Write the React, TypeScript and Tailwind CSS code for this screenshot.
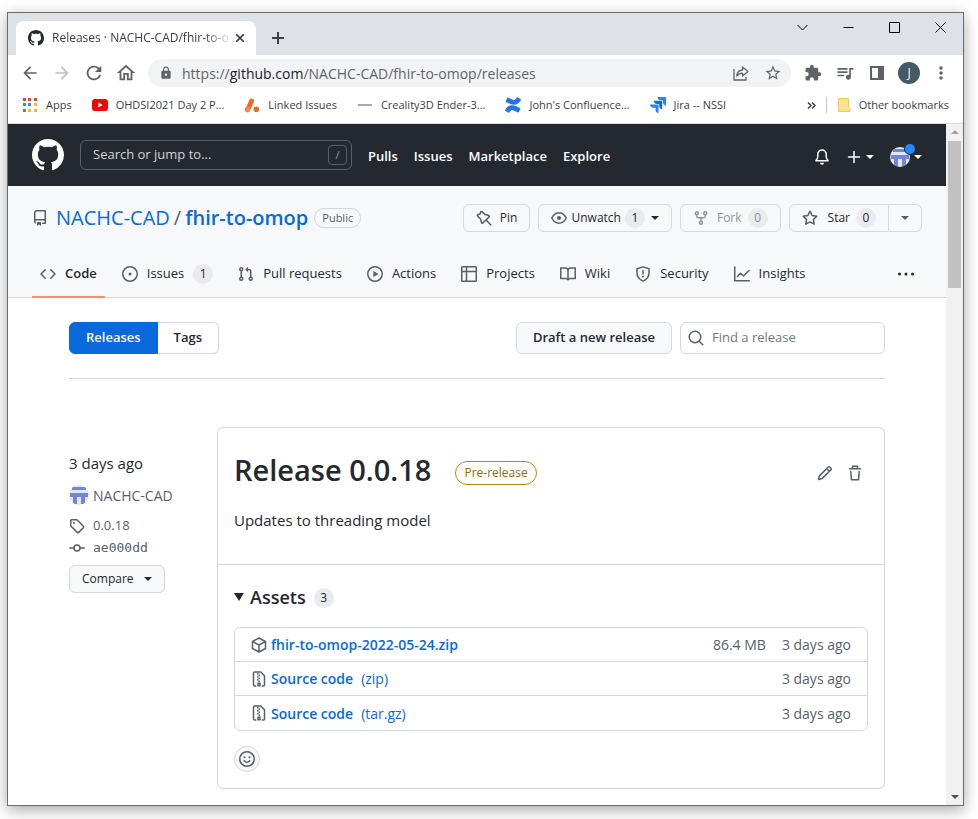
import type { ReactNode } from "react";
import {
  MdArrowBack,
  MdArrowForward,
  MdExtension,
  MdLock,
  MdMoreVert,
  MdOutlineHome,
  MdQueueMusic,
  MdRefresh,
  MdStarBorder,
} from "react-icons/md";
import { SiConfluence } from "react-icons/si";

function Octicon({ d, className }: { d: string; className: string }) {
  return (
    <svg viewBox="0 0 16 16" fill="currentColor" fillRule="evenodd" aria-hidden="true" className={className}>
      <path d={d} />
    </svg>
  );
}

const MARK =
  "M8 0C3.58 0 0 3.58 0 8c0 3.54 2.29 6.53 5.47 7.59.4.07.55-.17.55-.38 0-.19-.01-.82-.01-1.49-2.01.37-2.53-.49-2.69-.94-.09-.23-.48-.94-.82-1.13-.28-.15-.68-.52-.01-.53.63-.01 1.08.58 1.23.82.72 1.21 1.87.87 2.33.66.07-.52.28-.87.51-1.07-1.78-.2-3.64-.89-3.64-3.95 0-.87.31-1.59.82-2.15-.08-.2-.36-1.02.08-2.12 0 0 .67-.21 2.2.82.64-.18 1.32-.27 2-.27.68 0 1.36.09 2 .27 1.53-1.04 2.2-.82 2.2-.82.44 1.1.16 1.92.08 2.12.51.56.82 1.27.82 2.15 0 3.07-1.87 3.75-3.65 3.95.29.25.54.73.54 1.48 0 1.07-.01 1.93-.01 2.2 0 .21.15.46.55.38A8.013 8.013 0 0016 8c0-4.42-3.58-8-8-8z";
const REPO =
  "M2 2.5A2.5 2.5 0 014.5 0h8.75a.75.75 0 01.75.75v12.5a.75.75 0 01-.75.75h-2.5a.75.75 0 110-1.5h1.75v-2h-8a1 1 0 00-.714 1.7.75.75 0 01-1.072 1.05A2.495 2.495 0 012 11.5v-9zm10.5-1V9h-8c-.356 0-.694.074-1 .208V2.5a1 1 0 011-1h8zM5 12.25v3.25a.25.25 0 00.4.2l1.45-1.087a.25.25 0 01.3 0L8.6 15.7a.25.25 0 00.4-.2v-3.25a.25.25 0 00-.25-.25h-3.5a.25.25 0 00-.25.25z";
const CODE =
  "M4.72 3.22a.75.75 0 011.06 1.06L2.06 8l3.72 3.72a.75.75 0 11-1.06 1.06L.47 8.53a.75.75 0 010-1.06l4.25-4.25zm6.56 0a.75.75 0 10-1.06 1.06L13.94 8l-3.72 3.72a.75.75 0 101.06 1.06l4.25-4.25a.75.75 0 000-1.06l-4.25-4.25z";

// 16px outline icons: "line" is stroked, "solid" is filled.
const GLYPHS = {
  pin: { line: "M5.6 1.4 9.2 4.6l3.7.9.5 1.1-6.8 6.6-1.100-.4-.8-3.500L1.200 5.600l.4-.8L4.100 4l.7-2.500zM10.400 10.200l4.400 4.800", solid: "" },
  shield: { line: "M8 .9 2 2.800V7c0 3.700 2.200 6.300 6 8.100 3.800-1.800 6-4.400 6-8.100V2.800zM8 4.600v3.400", solid: "M7 10.500a1 1 0 1 0 2 0 1 1 0 1 0-2 0z" },
  issue: { line: "M.75 8a7.250 7.250 0 1 0 14.500 0 7.250 7.250 0 1 0-14.500 0z", solid: "M6.500 8a1.500 1.500 0 1 0 3 0 1.500 1.500 0 1 0-3 0z" },
  pull: {
    line: "M1.750 3.250a1.500 1.500 0 1 0 3 0 1.500 1.500 0 1 0-3 0zM1.750 12.750a1.500 1.500 0 1 0 3 0 1.500 1.500 0 1 0-3 0zM11.250 12.750a1.500 1.500 0 1 0 3 0 1.500 1.500 0 1 0-3 0zM3.250 5v6M12.750 11V5.500a2 2 0 0 0-2-2H9.500",
    solid: "M10 .7v5.600L7.200 3.500z",
  },
  play: { line: "M.75 8a7.250 7.250 0 1 0 14.500 0 7.250 7.250 0 1 0-14.500 0z", solid: "M6.400 5v6L11.400 8z" },
  table: { line: "M1.500.75h13a.75.75 0 0 1 .75.75v13a.75.75 0 0 1-.75.75h-13a.75.75 0 0 1-.75-.75v-13a.75.75 0 0 1 .75-.75zM.75 5.500h14.500M5.500.75v14.500", solid: "" },
  book: { line: "M.75 2h4.500C6.800 2 8 3.200 8 4.600v9.200c-.5-.8-1.300-1.200-2.300-1.200H.75zM15.250 2h-4.500C9.200 2 8 3.200 8 4.600v9.200c.5-.8 1.300-1.200 2.300-1.200h4.950z", solid: "" },
  graph: { line: "M.75 1v13.750h14.500M3.500 10.500 6.500 7.300l3 2.700L15 4.500", solid: "" },
  eye: {
    line: "M8 2.750C4.800 2.750 2.200 5.150.8 8c1.400 2.850 4 5.250 7.200 5.250S13.800 10.850 15.200 8C13.800 5.150 11.200 2.750 8 2.750z",
    solid: "M6 8a2 2 0 1 0 4 0 2 2 0 1 0-4 0z",
  },
  fork: {
    line: "M2.250 3.250a1.500 1.500 0 1 0 3 0 1.500 1.500 0 1 0-3 0zM10.750 3.250a1.500 1.500 0 1 0 3 0 1.500 1.500 0 1 0-3 0zM6.500 12.750a1.500 1.500 0 1 0 3 0 1.500 1.500 0 1 0-3 0zM3.750 5v1.250a1.500 1.500 0 0 0 1.500 1.500h5.500a1.500 1.500 0 0 0 1.500-1.500V5M8 7.750V11",
    solid: "",
  },
  star: { line: "M8 1.200l2.100 4.250 4.700.7-3.400 3.300.8 4.650L8 11.900l-4.200 2.200.8-4.650-3.400-3.300 4.700-.7z", solid: "" },
  bell: { line: "M8 1a4.250 4.250 0 0 0-4.250 4.250V8.500L1.900 11.800h12.200l-1.850-3.300V5.250A4.250 4.250 0 0 0 8 1z", solid: "M6 13.700h4a2 2 0 0 1-4 0z" },
  pencil: { line: "M1.500 14.500l.9-3.600L11.300 2a1 1 0 0 1 1.500 0L14 3.200a1 1 0 0 1 0 1.500l-8.900 8.900zM9.700 3.700l2.600 2.600", solid: "" },
  trash: { line: "M2.500 3.750h11M5.500 3.500V1.250h5V3.500M3.800 6.500l.6 8.250h7.200l.6-8.250", solid: "" },
  tag: {
    line: "M1.750 2.500v5c0 .3.1.5.3.7l6.200 6.200c.4.4 1 .4 1.400 0l4.700-4.700c.4-.4.4-1 0-1.400L8.200 2.050a1 1 0 0 0-.7-.3h-5a.75.75 0 0 0-.75.75z",
    solid: "M4 5a1 1 0 1 0 2 0 1 1 0 1 0-2 0z",
  },
  commit: { line: "M5 8a3 3 0 1 0 6 0 3 3 0 1 0-6 0zM.75 8H5M11 8h4.250", solid: "" },
  pack: { line: "M8 1l6.500 3.500v7L8 15l-6.500-3.500v-7zM1.700 4.700 8 8l6.300-3.300M8 8v7", solid: "" },
  zip: {
    line: "M4.800 15H3.500a1 1 0 0 1-1-1V2a1 1 0 0 1 1-1h6.300l3.700 3.700V14a1 1 0 0 1-1 1h-1.300M7 14.800v-2.600h2v2.600z",
    solid: "M6 2h1.500v1.500H6zM7.500 3.500H9V5H7.500zM6 5h1.500v1.500H6zM7.500 6.500H9V8H7.500zM6 8h1.500v1.500H6zM7.500 9.500H9V11H7.500z",
  },
  smiley: {
    line: "M.75 8a7.250 7.250 0 1 0 14.500 0 7.250 7.250 0 1 0-14.500 0zM5.300 9.700c.7 1 1.600 1.500 2.700 1.500s2-.5 2.700-1.500",
    solid: "M4.500 6.200a1 1 0 1 0 2 0 1 1 0 1 0-2 0zM9.500 6.200a1 1 0 1 0 2 0 1 1 0 1 0-2 0z",
  },
  search: { line: "M1.250 7a5.750 5.750 0 1 0 11.500 0 5.750 5.750 0 1 0-11.500 0zM11.200 11.200l3.600 3.600", solid: "" },
  plus: { line: "M8 2.500v11M2.500 8h11", solid: "" },
  dots: { line: "", solid: "M0 8a1.500 1.500 0 1 0 3 0 1.500 1.500 0 1 0-3 0zM6.500 8a1.500 1.500 0 1 0 3 0 1.500 1.500 0 1 0-3 0zM13 8a1.500 1.500 0 1 0 3 0 1.500 1.500 0 1 0-3 0z" },
};

function Glyph({ name, className = "" }: { name: keyof typeof GLYPHS; className?: string }) {
  const g = GLYPHS[name];
  return (
    <svg viewBox="0 0 16 16" fill="none" aria-hidden="true" className={`size-4 shrink-0 overflow-visible ${className}`}>
      <path d={g.line} stroke="currentColor" strokeWidth="1.500" strokeLinecap="round" strokeLinejoin="round" />
      <path d={g.solid} fill="currentColor" />
    </svg>
  );
}

function Caret() {
  return <span aria-hidden="true" className="inline-block border-x-4 border-t-4 border-x-transparent border-t-current" />;
}

function Identicon() {
  return (
    <svg viewBox="0 0 20 20" aria-hidden="true" className="size-5 shrink-0 rounded-full bg-[#dde7f2]">
      <path fill="#7486d3" d="M3 2h14v3H3zM1 8h18v4H1zM4 12h4v7H4zM12 12h4v7h-4z" />
    </svg>
  );
}

function ShareIcon() {
  return (
    <svg viewBox="0 0 18 18" fill="none" stroke="currentColor" strokeWidth="1.300" strokeLinejoin="round" aria-hidden="true" className="size-[18px]">
      <path d="M2 5v11h12v-3" />
      <path d="M10.500 3v3C7 6.300 5 8.500 4.700 12c1.500-2 3.300-2.800 5.800-2.800V12L16 7.500z" />
    </svg>
  );
}

function AppsIcon() {
  const colors = ["#ea4335", "#ea4335", "#ea4335", "#34a853", "#4285f4", "#fbbc04", "#34a853", "#fbbc04", "#fbbc04"];
  return (
    <span aria-hidden="true" className="grid size-4 grid-cols-3 gap-[2px] p-px">
      {colors.map((c, i) => (
        <span key={i} className="size-[3px]" style={{ backgroundColor: c }} />
      ))}
    </span>
  );
}

const youtube = (
  <svg viewBox="0 0 16 16" aria-hidden="true" className="size-4">
    <rect y="2" width="16" height="12" rx="3" fill="#f00" />
    <path fill="#fff" d="m6.300 5.400 4.500 2.600-4.500 2.600z" />
  </svg>
);
const issuesMark = (
  <svg viewBox="0 0 16 16" aria-hidden="true" className="size-4">
    <path d="M7.600 4 5 10" stroke="#f26722" strokeWidth="4.800" strokeLinecap="round" />
    <circle cx="3.600" cy="12.400" r="2.800" fill="#f58345" />
    <circle cx="12.300" cy="12.300" r="2.800" fill="#f26722" />
  </svg>
);
const creality = (
  <svg viewBox="0 0 16 16" aria-hidden="true" className="size-4">
    <path d="M1 8h14" stroke="#8a8d90" strokeWidth="1.500" />
  </svg>
);
const jira = (
  <svg viewBox="0 0 16 16" aria-hidden="true" className="size-4">
    <path fill="#2684ff" d="M7.500 0H16v8.500c-2 0-3-1.500-3-3V3.300h-2.300c-1.800 0-3.200-1.300-3.200-3.300z" />
    <path fill="#1868db" d="M3.800 3.800h8.400v8.400c-2 0-3-1.500-3-3V7H7C5.200 7 3.800 5.700 3.800 3.800z" />
    <path fill="#2684ff" d="M0 7.500h8.500V16c-2 0-3-1.500-3-3v-2.300H3.200C1.400 10.700 0 9.500 0 7.500z" />
  </svg>
);

const bookmarks: { label: string; icon: ReactNode }[] = [
  { label: "Apps", icon: <AppsIcon /> },
  { label: "OHDSI2021 Day 2 P...", icon: youtube },
  { label: "Linked Issues", icon: issuesMark },
  { label: "Creality3D Ender-3...", icon: creality },
  { label: "John's Confluence...", icon: <SiConfluence className="size-4 text-[#2374ee]" /> },
  { label: "Jira -- NSSI", icon: jira },
];

function ToolButton({ label, children }: { label: string; children: ReactNode }) {
  return (
    <button type="button" aria-label={label} className="flex size-8 shrink-0 items-center justify-center">
      {children}
    </button>
  );
}

function WindowButton({ label, d }: { label: string; d: string }) {
  return (
    <button type="button" aria-label={label} className="flex h-7 w-[46px] shrink-0 items-center justify-center text-black">
      <svg viewBox="0 0 11 11" fill="none" stroke="currentColor" aria-hidden="true" className="size-[11px]">
        <path d={d} />
      </svg>
    </button>
  );
}

function BrowserChrome() {
  return (
    <header className="text-[#3c4043]">
      <div className="flex h-[42px] bg-[#dee1e6] pl-2">
        <div className="mt-2 flex w-60 items-center rounded-t-lg bg-white pr-2 pl-3">
          <Octicon d={MARK} className="size-4 shrink-0 text-[#24292f]" />
          <span className="ml-2 min-w-0 flex-1 mask-r-from-85% text-[12px] whitespace-nowrap">
            Releases · NACHC-CAD/fhir-to-o
          </span>
          <button type="button" aria-label="Close tab" className="flex size-4 items-center justify-center">
            <svg viewBox="0 0 8 8" stroke="currentColor" strokeWidth="1.600" aria-hidden="true" className="size-2">
              <path d="m0 0 8 8M8 0 0 8" />
            </svg>
          </button>
        </div>
        <button type="button" aria-label="New tab" className="mt-2 flex w-11 items-center justify-center">
          <svg viewBox="0 0 12 12" stroke="currentColor" strokeWidth="2" aria-hidden="true" className="size-3">
            <path d="M6 0v12M0 6h12" />
          </svg>
        </button>
        <div className="ml-auto flex">
          <WindowButton label="Search tabs" d="m.5 3 5 5 5-5" />
          <WindowButton label="Minimize" d="M.5 5.500h10" />
          <WindowButton label="Maximize" d="M.5.5h10v10H.5z" />
          <WindowButton label="Close" d="m.5.5 10 10m0-10-10 10" />
        </div>
      </div>

      <div className="flex h-9 items-center px-1.5 text-[#5f6368]">
        <ToolButton label="Back">
          <MdArrowBack className="size-5" />
        </ToolButton>
        <ToolButton label="Forward">
          <MdArrowForward className="size-5 text-[#bdc1c6]" />
        </ToolButton>
        <ToolButton label="Reload">
          <MdRefresh className="size-[22px]" />
        </ToolButton>
        <ToolButton label="Home">
          <MdOutlineHome className="size-[22px]" />
        </ToolButton>
        <div className="mx-1.5 flex h-7 min-w-0 flex-1 items-center rounded-full bg-[#f1f3f4] pr-0.5 pl-[11px]">
          <MdLock className="size-3.5 shrink-0" />
          <span className="ml-[9px] flex-1 truncate text-[14px]">
            https://<span className="text-[#202124]">github.com</span>/NACHC-CAD/fhir-to-omop/releases
          </span>
          <ToolButton label="Share">
            <ShareIcon />
          </ToolButton>
          <ToolButton label="Bookmark this page">
            <MdStarBorder className="size-[18px]" />
          </ToolButton>
        </div>
        <ToolButton label="Extensions">
          <MdExtension className="size-[18px]" />
        </ToolButton>
        <ToolButton label="Media">
          <MdQueueMusic className="size-5" />
        </ToolButton>
        <ToolButton label="Side panel">
          <svg viewBox="0 0 14 14" fill="none" stroke="currentColor" strokeWidth="2" aria-hidden="true" className="size-3.5">
            <path d="M1 1h12v12H1z" />
            <path d="M10.500 1v12" strokeWidth="5" />
          </svg>
        </ToolButton>
        <ToolButton label="Profile">
          <span className="flex size-[22px] items-center justify-center rounded-full bg-[#455a64] text-[12px] text-white">J</span>
        </ToolButton>
        <ToolButton label="Menu">
          <MdMoreVert className="size-5" />
        </ToolButton>
      </div>

      <div className="flex h-[33px] items-center border-b border-[#dadce0] px-3.5 pb-1 text-[11px] whitespace-nowrap">
        <nav aria-label="Bookmarks" className="flex gap-5">
          {bookmarks.map((b) => (
            <a key={b.label} href="#" className="flex items-center gap-2">
              {b.icon}
              {b.label}
            </a>
          ))}
        </nav>
        <button type="button" aria-label="More bookmarks" className="ml-auto">
          <svg viewBox="0 0 9 7" fill="none" stroke="currentColor" strokeWidth="1.500" aria-hidden="true" className="h-[7px] w-[9px]">
            <path d="m1 .5 3 3-3 3M5 .5l3 3-3 3" />
          </svg>
        </button>
        <span className="mx-2.5 h-4 w-px bg-[#c4c7cb]" />
        <a href="#" className="flex items-center gap-2">
          <svg viewBox="0 0 14 16" aria-hidden="true" className="h-4 w-3.5">
            <path d="M1.500 1.500h10V10l1.500 1.500v3H1.500z" fill="#fde293" stroke="#f2c94c" />
          </svg>
          Other bookmarks
        </a>
      </div>
    </header>
  );
}

function SiteHeader() {
  return (
    <header className="flex h-[62px] items-center bg-[#24292f] px-6 text-white">
      <a href="#" aria-label="Homepage">
        <Octicon d={MARK} className="size-8" />
      </a>
      <div className="ml-4 flex h-[30px] w-[272px] items-center rounded-md border border-[#57606a] pr-1 pl-3">
        <input
          type="text"
          aria-label="Search or jump to"
          placeholder="Search or jump to..."
          className="min-w-0 flex-1 bg-transparent text-[13px] outline-none placeholder:text-[#d0d3d6]"
        />
        <kbd className="flex h-5 w-[19px] items-center justify-center rounded-sm border border-[#57606a] font-['Open_Sans',sans-serif] text-[11px] text-[#8c959f]">
          /
        </kbd>
      </div>
      <nav aria-label="Global" className="ml-4 flex gap-4 pt-[3px] text-[13px] font-semibold">
        {["Pulls", "Issues", "Marketplace", "Explore"].map((t) => (
          <a key={t} href="#">
            {t}
          </a>
        ))}
      </nav>
      <div className="ml-auto flex items-center pt-[3px]">
        <button type="button" aria-label="Notifications">
          <Glyph name="bell" />
        </button>
        <button type="button" aria-label="Create new" className="ml-4 flex items-center gap-1">
          <Glyph name="plus" />
          <Caret />
        </button>
        <button type="button" aria-label="Account" className="relative ml-4 flex items-center gap-1">
          <Identicon />
          <span className="absolute -top-1 left-3.5 size-3 rounded-full border border-[#24292f] bg-[#2188ff]" />
          <Caret />
        </button>
      </div>
    </header>
  );
}

function Count({ children }: { children: ReactNode }) {
  return (
    <span className="inline-flex h-5 min-w-5 items-center justify-center rounded-full bg-[#e9ebee] px-1.5 text-[12px] leading-[18px] font-medium">
      {children}
    </span>
  );
}

const actionButton =
  "flex h-7 items-center rounded-md border border-[#d5d8dc] bg-[#f6f8fa] px-3 text-[12px] font-medium";

const tabs: { label: string; icon: ReactNode; count?: number }[] = [
  { label: "Code", icon: <Octicon d={CODE} className="size-4 shrink-0" /> },
  { label: "Issues", icon: <Glyph name="issue" />, count: 1 },
  { label: "Pull requests", icon: <Glyph name="pull" /> },
  { label: "Actions", icon: <Glyph name="play" /> },
  { label: "Projects", icon: <Glyph name="table" /> },
  { label: "Wiki", icon: <Glyph name="book" /> },
  { label: "Security", icon: <Glyph name="shield" /> },
  { label: "Insights", icon: <Glyph name="graph" /> },
];

function RepoHeader() {
  return (
    <div className="border-b border-[#d5d8dc] bg-[#f6f8fa] px-6 pt-[18px] text-[#57606a]">
      <div className="flex h-7 items-center">
        <Octicon d={REPO} className="size-4 shrink-0" />
        <h1 className="ml-2 flex gap-1 text-[20px] leading-7 whitespace-nowrap">
          <a href="#" className="text-[#0969da]">
            NACHC-CAD
          </a>
          <span>/</span>
          <a href="#" className="font-semibold text-[#0969da]">
            fhir-to-omop
          </a>
        </h1>
        <span className="ml-1.5 flex h-5 items-center rounded-full border border-[#d0d7de] px-[7px] text-[11px] font-medium">Public</span>
        <div className="ml-auto flex gap-2 text-[#24292f]">
          <button type="button" className={actionButton}>
            <Glyph name="pin" className="mr-2 text-[#57606a]" />
            Pin
          </button>
          <button type="button" className={actionButton}>
            <Glyph name="eye" className="mr-1 text-[#57606a]" />
            Unwatch
            <span className="mr-1.5 ml-1 flex">
              <Count>1</Count>
            </span>
            <Caret />
          </button>
          <button type="button" disabled className={`${actionButton} text-[#8c959f]`}>
            <Glyph name="fork" className="mr-2" />
            <span className="mr-1.5">Fork</span>
            <Count>0</Count>
          </button>
          <div className="flex">
            <button type="button" className={`${actionButton} rounded-r-none`}>
              <Glyph name="star" className="mr-2.5 text-[#57606a]" />
              <span className="mr-1.5">Star</span>
              <Count>0</Count>
            </button>
            <button type="button" aria-label="Add to list" className={`${actionButton} rounded-l-none border-l-0 text-[#57606a]`}>
              <Caret />
            </button>
          </div>
        </div>
      </div>
      <nav aria-label="Repository" className="mt-[18px] -mb-px flex h-12 gap-[9px] text-[13px]">
        {tabs.map((t, i) => (
          <a
            key={t.label}
            href="#"
            aria-current={i === 0 ? "page" : undefined}
            className={`flex items-center gap-[9px] border-b-2 px-2 pt-0.5 whitespace-nowrap ${i === 0 ? "border-[#fd8c73] font-semibold" : "border-transparent"}`}
          >
            {t.icon}
            <span className="text-[#24292f]">{t.label}</span>
            {t.count !== undefined && (
              <span className="flex text-[#24292f]">
                <Count>{t.count}</Count>
              </span>
            )}
          </a>
        ))}
        <button type="button" aria-label="More" className="ml-auto px-2 text-[#24292f]">
          <Glyph name="dots" />
        </button>
      </nav>
    </div>
  );
}

const assets = [
  { name: "fhir-to-omop-2022-05-24.zip", kind: "", size: "86.4 MB", pack: true },
  { name: "Source code", kind: "(zip)", size: "", pack: false },
  { name: "Source code", kind: "(tar.gz)", size: "", pack: false },
];

function ReleaseCard() {
  return (
    <article className="min-w-0 flex-1 rounded-md border border-[#d0d7de]">
      <div className="h-[137px] border-b border-[#d0d7de] px-4 pt-[18px]">
        <div className="flex h-12 items-center">
          <h2 className="text-[29px] leading-[48px] font-semibold whitespace-nowrap">Release 0.0.18</h2>
          <span className="mt-1.5 ml-6 flex h-6 items-center rounded-full border border-[#bf8700] px-2 text-[12px] font-medium text-[#9a6700]">
            Pre-release
          </span>
          <div className="mt-1.5 mr-[5px] ml-auto flex items-center gap-3.5 text-[#57606a]">
            <button type="button" aria-label="Edit release">
              <Glyph name="pencil" />
            </button>
            <button type="button" aria-label="Delete release">
              <Glyph name="trash" />
            </button>
          </div>
        </div>
        <p className="mt-3.5 text-[15px] leading-6">Updates to threading model</p>
      </div>
      <div className="p-4">
        <details open>
          <summary className="flex h-8 list-none items-center">
            <span aria-hidden="true" className="border-x-5 border-t-8 border-x-transparent border-t-current" />
            <span className="ml-1.5 text-[18px] font-semibold">Assets</span>
            <span className="ml-2 flex pt-0.5">
              <Count>3</Count>
            </span>
          </summary>
          <ul className="mt-3.5 divide-y divide-[#d0d7de] rounded-md border border-[#d0d7de] text-[14px]">
            {assets.map((a) => (
              <li key={a.name + a.kind} className="flex h-[34px] items-center px-4 text-[#57606a]">
                <Glyph name={a.pack ? "pack" : "zip"} />
                <a href="#" className="ml-1 flex gap-2 text-[#0969da]">
                  <span className="font-semibold">{a.name}</span>
                  {a.kind}
                </a>
                <span className="ml-auto">{a.size}</span>
                <span className="ml-4">3 days ago</span>
              </li>
            ))}
          </ul>
        </details>
        <button
          type="button"
          aria-label="Add your reaction"
          className="mt-[15px] flex size-[26px] items-center justify-center rounded-full border border-[#d5d8dc] bg-[#f6f8fa] text-[#57606a]"
        >
          <Glyph name="smiley" />
        </button>
      </div>
    </article>
  );
}

function Releases() {
  return (
    <main className="px-[61px] pt-6 pb-4 text-[#24292f]">
      <div className="flex h-8">
        <nav aria-label="Releases and tags" className="flex text-[13px] font-semibold">
          <a href="#" aria-current="page" className="flex items-center rounded-l-md border border-[#0969da] bg-[#0969da] px-4 text-white">
            Releases
          </a>
          <a href="#" className="flex items-center rounded-r-md border border-l-0 border-[#d0d7de] px-4">
            Tags
          </a>
        </nav>
        <button type="button" className="ml-auto rounded-md border border-[#d5d8dc] bg-[#f6f8fa] px-4 text-[13px] font-semibold">
          Draft a new release
        </button>
        <label className="ml-2 flex w-[205px] items-center rounded-md border border-[#d0d7de] pl-[7px] text-[#57606a]">
          <Glyph name="search" />
          <input
            type="text"
            aria-label="Find a release"
            placeholder="Find a release"
            className="ml-2 min-w-0 flex-1 bg-transparent text-[13px] outline-none placeholder:text-[#6e7781]"
          />
        </label>
      </div>
      <hr className="mt-6 border-[#d0d7de]" />
      <section className="mt-12 flex">
        <div className="flex w-[148px] shrink-0 flex-col items-start pt-6 text-[#57606a]">
          <p className="text-[15px] leading-6 text-[#24292f]">3 days ago</p>
          <a href="#" className="mt-2 flex h-6 items-center gap-1 text-[14px]">
            <Identicon />
            NACHC-CAD
          </a>
          <a href="#" className="mt-2 flex h-[22px] items-center gap-2 text-[13px]">
            <Glyph name="tag" />
            0.0.18
          </a>
          <a href="#" className="flex h-[22px] items-center gap-2 font-['DejaVu_Sans_Mono',monospace] text-[13px]">
            <Glyph name="commit" />
            ae000dd
          </a>
          <button type="button" className={`${actionButton} mt-1.5 gap-2.5 text-[#24292f]`}>
            Compare
            <Caret />
          </button>
        </div>
        <ReleaseCard />
      </section>
    </main>
  );
}

function Scrollbar() {
  return (
    <div aria-hidden="true" className="flex w-[17px] shrink-0 flex-col items-center bg-[#f1f1f1] py-1.5">
      <span className="border-x-4 border-b-4 border-x-transparent border-b-[#a3a3a3]" />
      <span className="mt-[7px] h-[147px] w-[13px] bg-[#c1c1c1]" />
      <span className="mt-auto border-x-4 border-t-4 border-x-transparent border-t-[#505050]" />
    </div>
  );
}

export default function App() {
  return (
    <div className="flex min-h-screen bg-white pt-3 pr-3.5 pb-[13px] pl-[7px] font-['Open_Sans',sans-serif]">
      <div className="flex min-w-0 flex-1 flex-col border border-[#6b6b6f] bg-white shadow-[0_4px_14px_rgba(0,0,0,0.35)]">
        <BrowserChrome />
        <div className="flex flex-1">
          <div className="min-w-0 flex-1">
            <SiteHeader />
            <RepoHeader />
            <Releases />
          </div>
          <Scrollbar />
        </div>
      </div>
    </div>
  );
}
